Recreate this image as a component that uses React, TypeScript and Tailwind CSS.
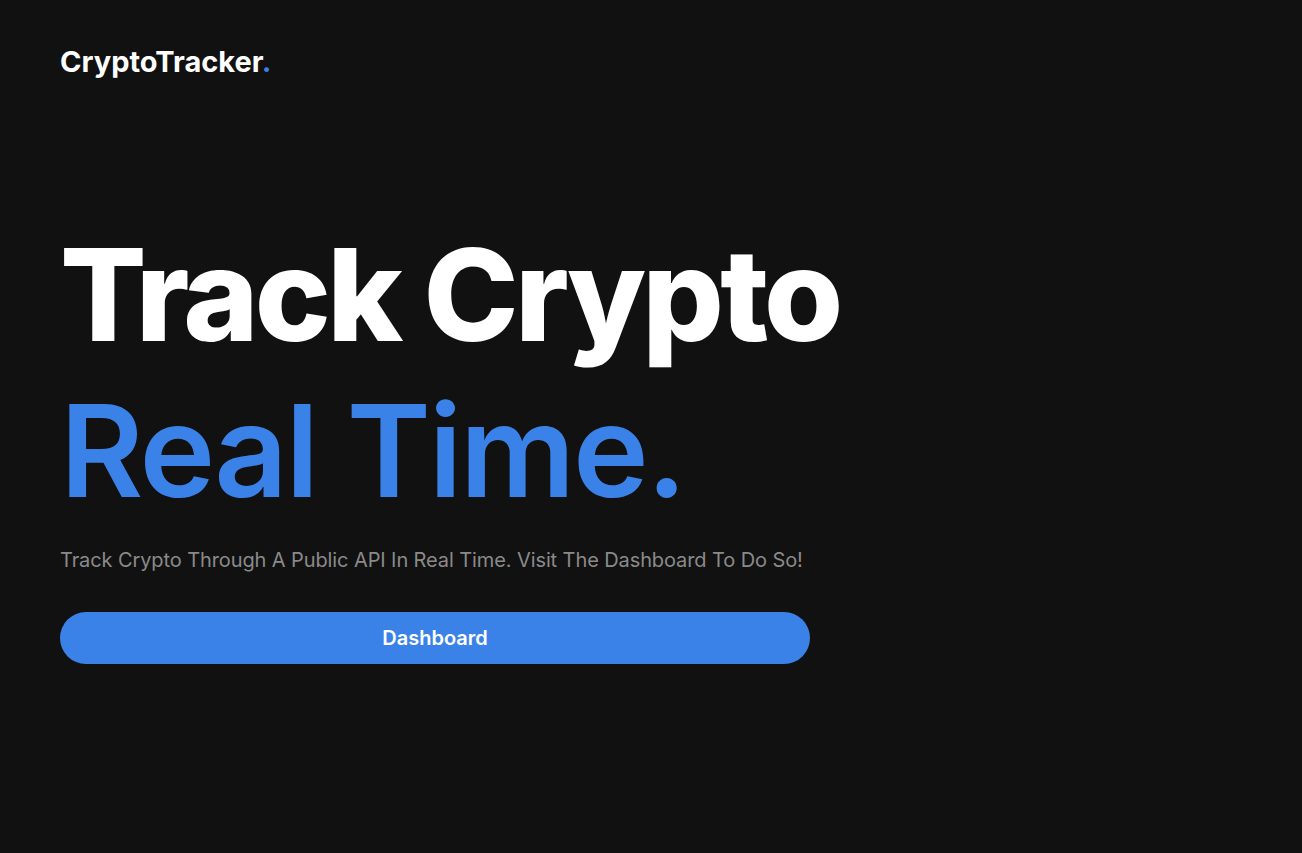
export default function App() {
  return (
    <div className="min-h-[853px] w-full bg-[#111111] font-['Inter',sans-serif] text-white">
      <div className="px-[60px] pt-[44px]">
        <div className="text-[29px] font-bold leading-[36px]">
          CryptoTracker<span className="text-[#3b82e8]">.</span>
        </div>
        <div className="mt-[137px] flex flex-col">
          <h1 className="text-[128px] font-extrabold leading-[156px] tracking-[-3.75px]">Track Crypto</h1>
          <h2 className="text-[128px] font-semibold leading-[156px] tracking-[-2.3px] text-[#3b82e8]">Real Time.</h2>
          <p className="mt-[17px] text-[20px] leading-[28px] tracking-[-0.1px] text-[#8a8a8a]">
            Track Crypto Through A Public API In Real Time. Visit The Dashboard To Do So!
          </p>
          <button className="mt-[38px] h-[52px] w-[750px] rounded-full bg-[#3b82e8] text-[20px] font-semibold text-white">
            Dashboard
          </button>
        </div>
      </div>
    </div>
  );
}
